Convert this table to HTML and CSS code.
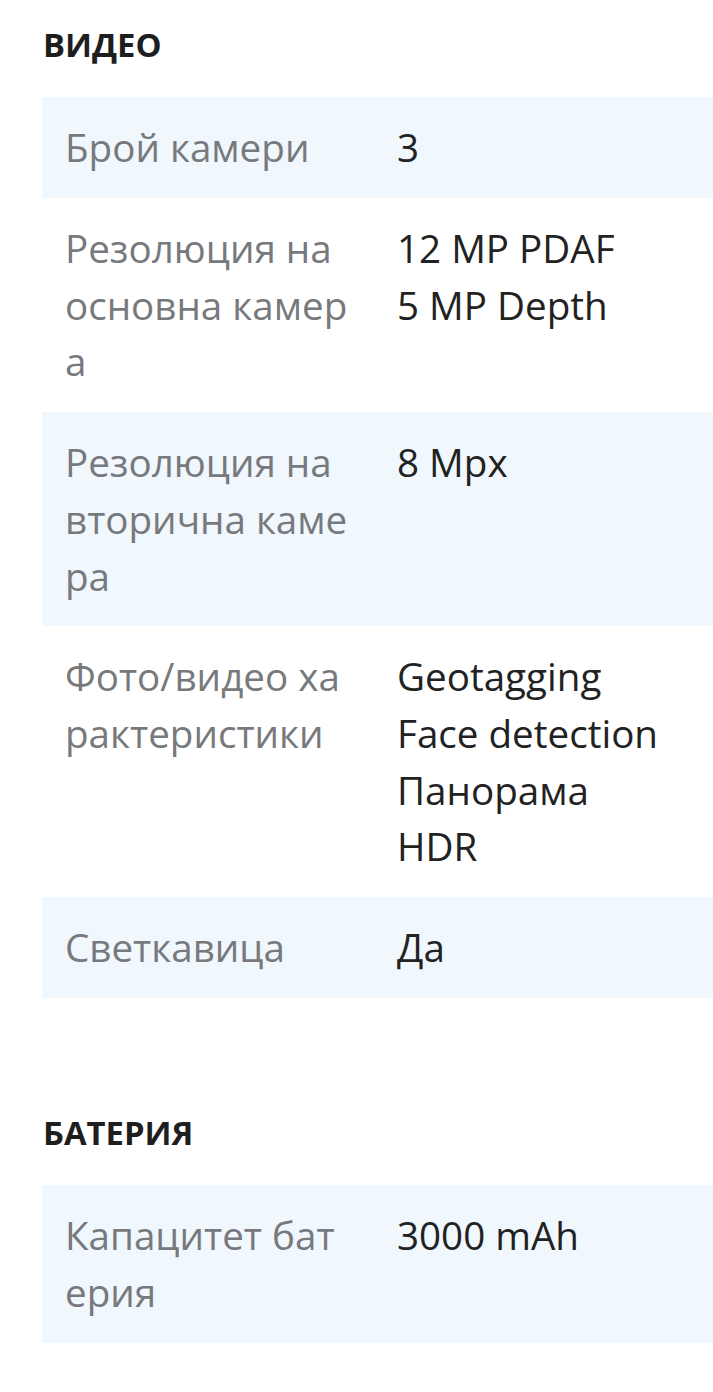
FILE: index.html
```html
<!DOCTYPE html>
<html lang="bg">
<head>
<meta charset="utf-8">
<link rel="stylesheet" href="styles.css">
</head>
<body>
<div class="page">
  <section class="group">
    <h2 class="group-title">ВИДЕО</h2>
    <div class="specs">
      <div class="row alt"><div class="label">Брой камери</div><div class="value">3</div></div>
      <div class="row"><div class="label">Резолюция на основна камера</div><div class="value">12 MP PDAF<br>5 MP Depth</div></div>
      <div class="row alt"><div class="label">Резолюция на вторична камера</div><div class="value">8 Mpx</div></div>
      <div class="row"><div class="label">Фото/видео характеристики</div><div class="value">Geotagging<br>Face detection<br>Панорама<br>HDR</div></div>
      <div class="row alt"><div class="label">Светкавица</div><div class="value">Да</div></div>
    </div>
  </section>
  <section class="group second">
    <h2 class="group-title">БАТЕРИЯ</h2>
    <div class="specs">
      <div class="row alt"><div class="label">Капацитет батерия</div><div class="value">3000 mAh</div></div>
    </div>
  </section>
</div>
</body>
</html>
```

FILE: styles.css
```css
html, body {
  margin: 0;
  padding: 0;
  background: #ffffff;
}
body {
  font-family: "Open Sans", "Noto Sans", sans-serif;
  -webkit-font-smoothing: antialiased;
}
.page {
  padding: 24px 0 0 42px;
}
.group-title {
  margin: 0 0 0 1px;
  font-size: 32.8px;
  font-weight: 700;
  line-height: 41px;
  color: #1e1e1e;
}
.specs {
  margin-top: 32px;
}
.second {
  margin-top: 114px;
}
.row {
  display: grid;
  grid-template-columns: 289px 1fr;
  column-gap: 43px;
  padding: 22.2px 24px 22.2px 23px;
  font-size: 38.6px;
  line-height: 56.6px;
}
.row.alt {
  background: #f0f7fd;
}
.label {
  color: #77797c;
  word-break: break-all;
}
.value {
  color: #222222;
}
```
